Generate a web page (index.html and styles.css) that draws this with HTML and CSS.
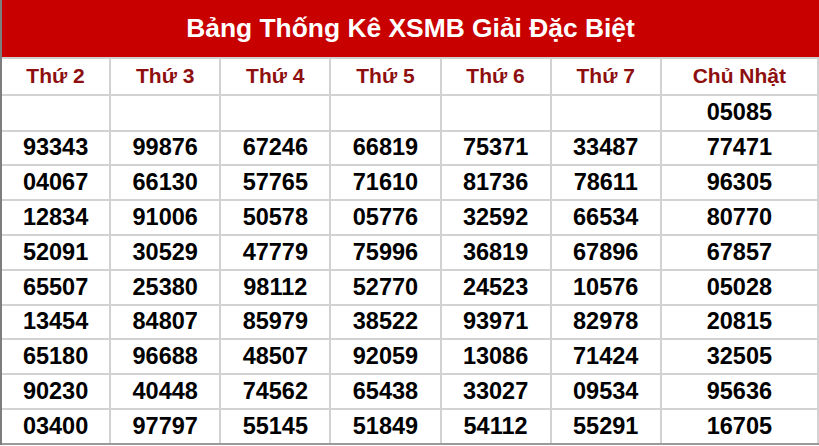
FILE: index.html
```html
<!DOCTYPE html>
<html lang="vi">
<head>
<meta charset="utf-8">
<title>Bảng Thống Kê XSMB Giải Đặc Biệt</title>
<link rel="stylesheet" href="styles.css">
</head>
<body>
<div class="board">
  <div class="title">Bảng Thống Kê XSMB Giải Đặc Biệt</div>
  <table class="stats">
    <colgroup>
      <col class="c1"><col class="c"><col class="c"><col class="c"><col class="c"><col class="c"><col class="clast">
    </colgroup>
    <thead>
      <tr><th>Thứ 2</th><th>Thứ 3</th><th>Thứ 4</th><th>Thứ 5</th><th>Thứ 6</th><th>Thứ 7</th><th>Chủ Nhật</th></tr>
    </thead>
    <tbody>
      <tr><td></td><td></td><td></td><td></td><td></td><td></td><td>05085</td></tr>
      <tr><td>93343</td><td>99876</td><td>67246</td><td>66819</td><td>75371</td><td>33487</td><td>77471</td></tr>
      <tr><td>04067</td><td>66130</td><td>57765</td><td>71610</td><td>81736</td><td>78611</td><td>96305</td></tr>
      <tr><td>12834</td><td>91006</td><td>50578</td><td>05776</td><td>32592</td><td>66534</td><td>80770</td></tr>
      <tr><td>52091</td><td>30529</td><td>47779</td><td>75996</td><td>36819</td><td>67896</td><td>67857</td></tr>
      <tr><td>65507</td><td>25380</td><td>98112</td><td>52770</td><td>24523</td><td>10576</td><td>05028</td></tr>
      <tr><td>13454</td><td>84807</td><td>85979</td><td>38522</td><td>93971</td><td>82978</td><td>20815</td></tr>
      <tr><td>65180</td><td>96688</td><td>48507</td><td>92059</td><td>13086</td><td>71424</td><td>32505</td></tr>
      <tr><td>90230</td><td>40448</td><td>74562</td><td>65438</td><td>33027</td><td>09534</td><td>95636</td></tr>
      <tr><td>03400</td><td>97797</td><td>55145</td><td>51849</td><td>54112</td><td>55291</td><td>16705</td></tr>
    </tbody>
  </table>
</div>
</body>
</html>
```
FILE: styles.css
```css
html, body {
  margin: 0;
  padding: 0;
  background: #ffffff;
}
.board {
  width: 819px;
  box-sizing: border-box;
  border-left: 2px solid #7d7d7d;
  font-family: "Liberation Sans", Arial, sans-serif;
}
.title {
  height: 57px;
  background: #c80000;
  color: #ffffff;
  font-weight: 700;
  font-size: 26.4px;
  display: flex;
  align-items: center;
  justify-content: center;
  border-bottom: 2px solid #d0d0d0;
  box-sizing: content-box;
}
.stats {
  width: 817px;
  border-collapse: collapse;
  table-layout: fixed;
}
.c1 { width: 108px; }
.c { width: 110px; }
.clast { width: 157px; }
.stats th,
.stats td {
  border: 2px solid #d2d2d2;
  padding: 0;
  height: 32.8px;
  text-align: center;
  font-weight: 700;
}
.stats thead th {
  border-top: none;
  height: 34.8px;
  color: #8e0f0f;
  font-size: 21px;
}
.stats td {
  color: #000000;
  font-size: 23.5px;
}
.stats tbody tr:first-child td {
  height: 33.8px;
}
.stats tr > :first-child {
  border-left: none;
}
.stats tbody tr:last-child td {
  border-bottom: 2px solid #9a9a9a;
}
```
